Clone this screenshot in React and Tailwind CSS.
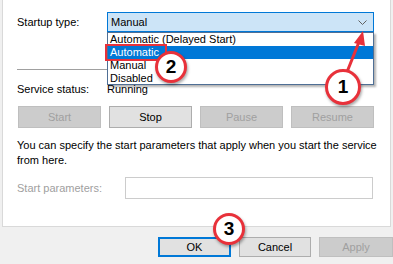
import React from "react";

const font = { fontFamily: '"Liberation Sans", Arial, sans-serif' };

const Btn = ({ label, disabled, className = "" }) => (
  <div
    className={
      "flex items-center justify-center border " +
      (disabled
        ? "bg-[#cccccc] border-[#bfbfbf] text-[#a0a0a0] "
        : "bg-[#e1e1e1] border-[#adadad] text-black ") +
      className
    }
  >
    {label}
  </div>
);

const Badge = ({ n, className }) => (
  <div
    className={
      "absolute flex items-center justify-center rounded-full bg-white border-[3px] border-[#e8313a] shadow-[1px_2px_3px_rgba(0,0,0,0.35)] text-[19px] font-bold text-black " +
      className
    }
  >
    {n}
  </div>
);

export default function App() {
  return (
    <div
      className="relative w-[393px] h-[264px] overflow-hidden bg-[#f0f0f0] text-[11px] text-black"
      style={font}
    >
      {/* tab page */}
      <div className="ml-[2px] w-[389px] h-[227px] bg-white border-l border-r border-b border-[#d9d9d9] pl-[14px] pt-[12px]">
        <div className="flex items-center h-[20px]">
          <div className="w-[90px]">Startup type:</div>
          <div className="w-[267px] h-[20px] border border-[#0078d7] bg-[#cce4f7] pl-[3px] pr-[6px] flex items-center justify-between">
            <span>Manual</span>
            <svg width="9" height="5" viewBox="0 0 9 5">
              <path d="M0.5 0.5 L4.5 4.5 L8.5 0.5" fill="none" stroke="#606060" strokeWidth="1" />
            </svg>
          </div>
        </div>

        <div className="mt-[37px] h-px w-[355px] bg-[#a0a0a0]" />

        <div className="mt-[12px] h-[15px] flex items-center">
          <div className="w-[90px]">Service status:</div>
          <div>Running</div>
        </div>

        <div className="mt-[9px] flex gap-[8px] pl-px">
          <Btn label="Start" disabled className="w-[83px] h-[22px]" />
          <Btn label="Stop" className="w-[83px] h-[22px]" />
          <Btn label="Pause" disabled className="w-[83px] h-[22px]" />
          <Btn label="Resume" disabled className="w-[83px] h-[22px]" />
        </div>

        <div className="mt-[10px] leading-[15px] whitespace-nowrap">
          You can specify the start parameters that apply when you start the service
          <br />
          from here.
        </div>

        <div className="mt-[9px] flex items-center">
          <div className="w-[108px] text-[#a0a0a0]">Start parameters:</div>
          <div className="w-[248px] h-[22px] border border-[#cccccc] bg-white" />
        </div>
      </div>

      {/* dialog buttons */}
      <div className="flex mt-[10px] pl-[158px] gap-[8px]">
        <div className="w-[73px] h-[20px] border-2 border-[#0078d7] bg-[#e1e1e1] flex items-center justify-center">
          OK
        </div>
        <Btn label="Cancel" className="w-[72px] h-[20px]" />
        <Btn label="Apply" disabled className="w-[74px] h-[20px]" />
      </div>

      {/* open dropdown list */}
      <div className="absolute left-[107px] top-[32px] w-[267px] bg-white border border-[#4f6f95] shadow-[2px_2px_2px_rgba(0,0,0,0.3)] leading-[13px]">
        <div className="pl-[2px] h-[13px]">Automatic (Delayed Start)</div>
        <div className="pl-[2px] h-[13px] bg-[#0078d7] text-white">Automatic</div>
        <div className="pl-[2px] h-[13px]">Manual</div>
        <div className="pl-[2px] h-[12px]">Disabled</div>
      </div>

      {/* annotations */}
      <div className="absolute left-[105px] top-[44px] w-[62px] h-[17px] border-2 border-[#e8313a]" />
      <svg className="absolute left-0 top-0 pointer-events-none" width="393" height="264">
        <line x1="347" y1="72" x2="359" y2="42" stroke="#e8313a" strokeWidth="3" />
        <polygon points="363,31 354,43 365,46" fill="#e8313a" />
      </svg>
      <Badge n="1" className="left-[325px] top-[69px] w-[36px] h-[36px]" />
      <Badge n="2" className="left-[155px] top-[51px] w-[32px] h-[32px]" />
      <Badge n="3" className="left-[213px] top-[213px] w-[32px] h-[32px]" />
    </div>
  );
}
